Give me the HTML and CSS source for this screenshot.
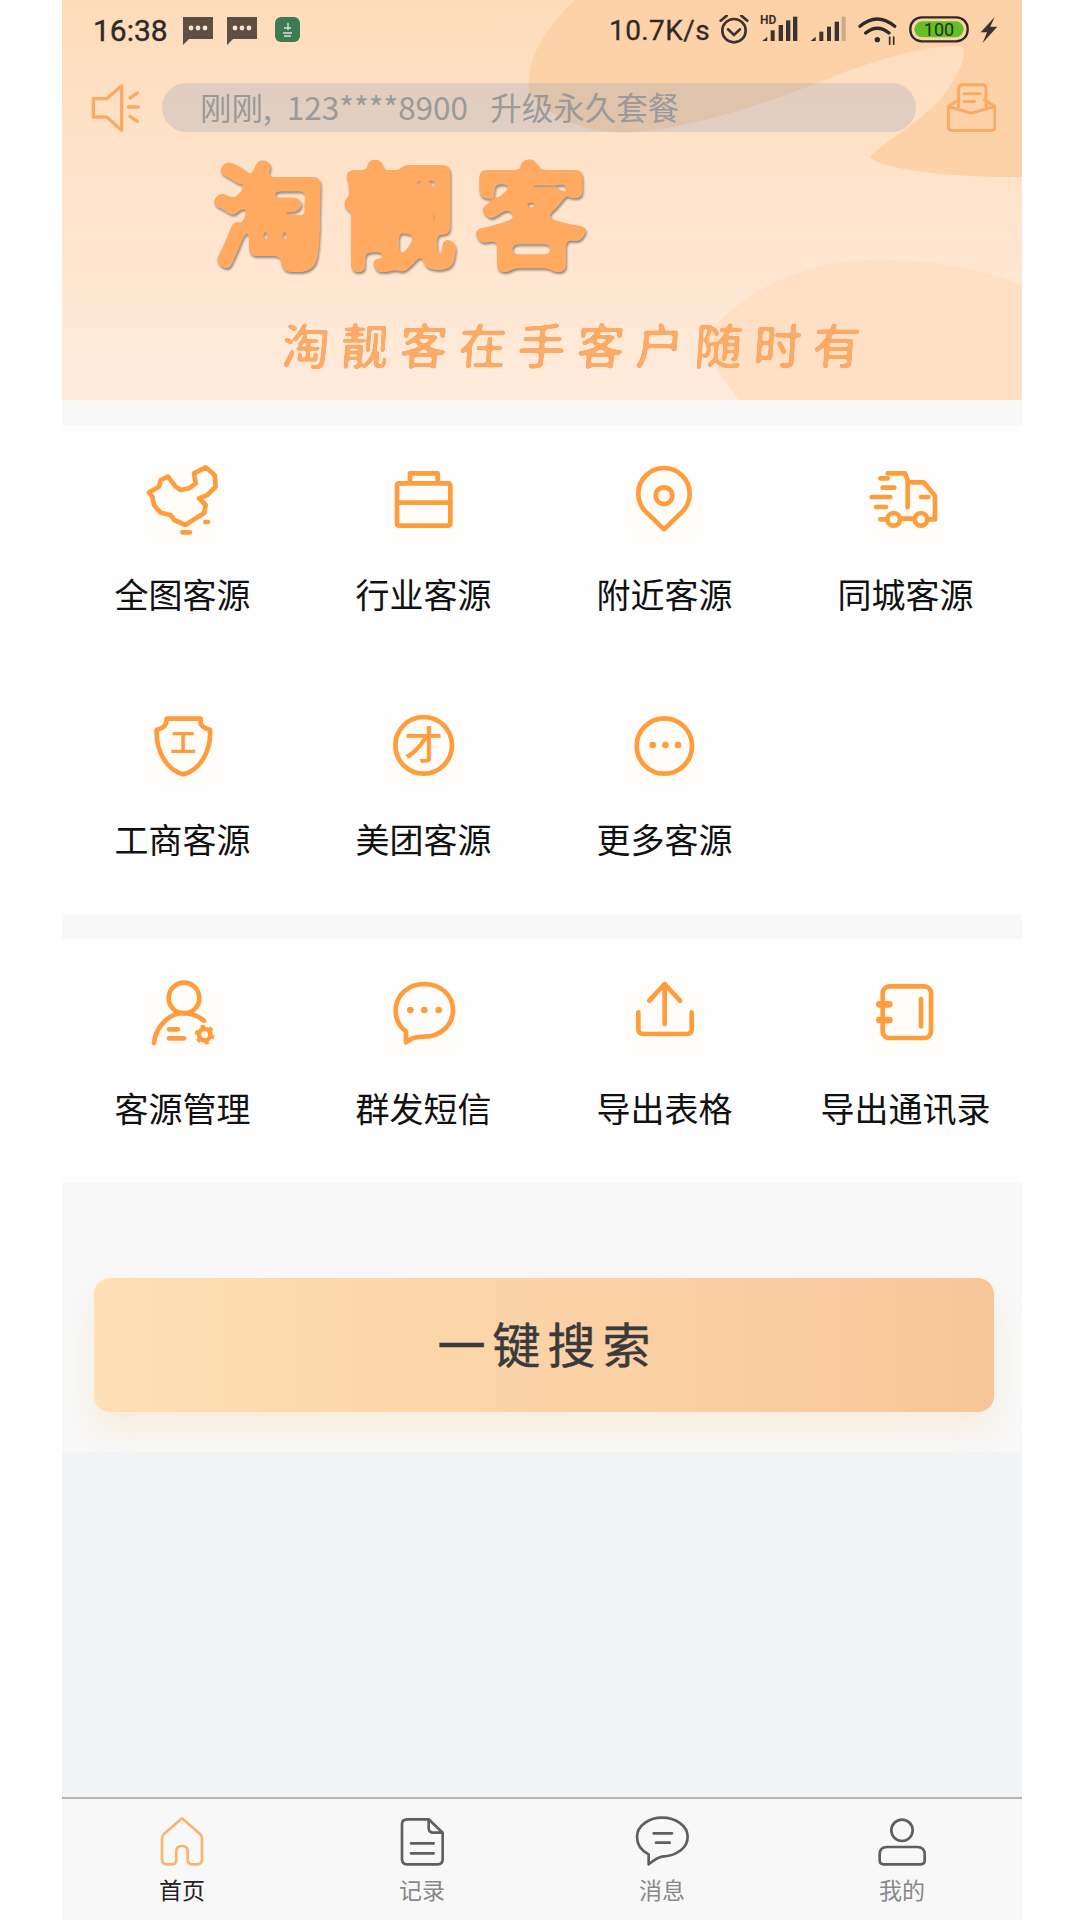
FILE: index.html
```html
<!DOCTYPE html>
<html>
  <head>
    <title>淘靓客</title>
    <meta charset="utf-8">
    <link rel="stylesheet" href="styles.css">
  </head>
  <body>
    <div class="phone">
      <header class="banner">
        <svg class="blobs" viewBox="62 0 960 400" width="960" height="400">
          <defs>
            <filter id="goo"><feGaussianBlur stdDeviation="3"/><feComponentTransfer><feFuncA type="linear" slope="12" intercept="-5"/></feComponentTransfer></filter>
            <filter id="goo-small"><feGaussianBlur stdDeviation="1.2"/><feComponentTransfer><feFuncA type="linear" slope="6" intercept="-2.2"/></feComponentTransfer></filter>
          </defs>
          <path class="blob-top" d="M575 0 C538 35 524 68 530 95 C560 125 600 136 640 132 C700 125 760 105 817 83 C860 65 920 45 960 46 C970 50 960 75 940 100 C915 125 880 145 870 157 C880 170 960 178 1022 177 V0 Z"/>
          <path class="blob-bottom" d="M704 340 C735 295 800 262 867 260 C930 258 985 270 1022 285 V400 H740 C722 380 710 360 704 340 Z"/>
        </svg>

        <div class="status">
          <span class="time">16:38</span>
          <svg class="st-msg" viewBox="0 0 30 28"><path d="M0 0 H30 V22 H6 L0 28 Z"/><circle class="dot" cx="8" cy="11" r="2.4"/><circle class="dot" cx="15" cy="11" r="2.4"/><circle class="dot" cx="22" cy="11" r="2.4"/></svg>
          <svg class="st-msg" viewBox="0 0 30 28"><path d="M0 0 H30 V22 H6 L0 28 Z"/><circle class="dot" cx="8" cy="11" r="2.4"/><circle class="dot" cx="15" cy="11" r="2.4"/><circle class="dot" cx="22" cy="11" r="2.4"/></svg>
          <svg class="st-app" viewBox="0 0 25 25"><rect width="25" height="25" rx="6"/><path d="M13 6 V13 M9 11 H16 M8 16 H17 M9 19 H16"/></svg>
          <div class="status-right">
            <span class="speed">10.7K/s</span>
            <svg class="st-alarm" viewBox="505 45 90 90"><circle cx="550" cy="92" r="35"/><path d="M510 62 L528 47 M590 62 L572 47 M532 88 L550 105 L568 88"/></svg>
            <svg class="st-signal" viewBox="28 30 114 90"><text class="hd" x="28" y="58">HD</text><path d="M35 108 L50 95 V108 Z"/><rect x="60" y="76" width="12" height="32"/><rect x="84" y="60" width="13" height="48"/><rect x="106" y="46" width="13" height="62"/><rect x="127" y="35" width="13" height="73"/></svg>
            <svg class="st-signal" viewBox="172 30 114 90"><path d="M177 108 L192 95 V108 Z"/><rect x="203" y="80" width="12" height="28"/><rect x="226" y="65" width="12" height="43"/><rect x="249" y="50" width="13" height="58"/><rect class="off" x="270" y="35" width="12" height="73"/></svg>
            <svg class="st-wifi" viewBox="322 30 120 90"><path d="M328 64 Q380 20 432 64 M345 84 Q380 55 415 84"/><circle cx="380" cy="104" r="8"/><path class="thin" d="M417 96 V118 M429 96 V118"/></svg>
            <svg class="st-batt" viewBox="480 30 180 90"><rect class="shell" x="484" y="37" width="172" height="72" rx="34"/><rect class="fill" x="496" y="49" width="148" height="48" rx="24"/><text x="570" y="92">100</text></svg>
            <svg class="st-bolt" viewBox="688 30 50 90"><path d="M734 34 L690 82 L710 82 L696 116 L742 65 L720 65 Z"/></svg>
          </div>
        </div>

        <div class="notice">
          <svg class="ic-speaker" viewBox="120 250 156 150"><path d="M215 258 L170 297 H130 V352 H170 L215 392 Z M240 295 L262 280 M235 322 H265 M240 350 L262 365"/></svg>
          <div class="notice-pill">刚刚<span class="comma">,</span> 123****8900  升级永久套餐</div>
          <svg class="ic-mail" viewBox="1190 250 150 146"><path d="M1228 300 L1197 320 V380 Q1197 392 1210 392 H1325 Q1337 392 1337 380 V320 L1305 300 M1197 320 L1265 340 L1337 320 M1228 320 V268 Q1228 255 1240 255 H1298 Q1310 255 1310 268 V320 M1245 282 H1292 M1245 305 H1275"/></svg>
        </div>

        <svg class="logo" viewBox="0 0 400 135" width="400" height="135"><text x="7" y="109">淘靓客</text></svg>
        <div class="slogan">淘靓客在手客户随时有</div>
      </header>

      <section class="grid two-rows">
        <div class="cell">
          <div class="icon"><svg viewBox="232 75 270 270"><path d="M265 187 L295 170 L300 150 L322 140 L345 170 L360 180 L385 175 L405 160 L400 130 L435 112 L462 135 L465 170 L440 195 L415 205 L435 225 L430 250 L400 268 L375 285 L340 270 L330 255 L300 248 L280 225 L275 200 Z M365 307 H388 M434 276 H442"/></svg></div>
          <div class="label">全图客源</div>
        </div>
        <div class="cell">
          <div class="icon"><svg viewBox="954 75 270 270"><rect x="1008" y="160" width="160" height="127" rx="6"/><path d="M1047 158 V130 H1130 V158 M1008 218 H1168"/></svg></div>
          <div class="label">行业客源</div>
        </div>
        <div class="cell">
          <div class="icon"><svg viewBox="240 75 270 270"><path d="M372 298 L317 245 A77 77 0 1 1 427 245 Z"/><circle cx="372" cy="197" r="25"/></svg></div>
          <div class="label">附近客源</div>
        </div>
        <div class="cell">
          <div class="icon"><svg viewBox="960 75 270 270"><path d="M1040 130 H1092 L1100 150 V232 M1100 157 H1148 L1182 197 V268 H1160 M1082 266 H1120 M1018 145 H1040 M1025 173 H1060 M992 201 H1048 M1005 231 H1035 M1018 268 H1038 M1140 201 H1162"/><circle cx="1058" cy="268" r="19"/><circle cx="1140" cy="268" r="19"/></svg></div>
          <div class="label">同城客源</div>
        </div>
        <div class="cell">
          <div class="icon"><svg viewBox="232 804 270 270"><path d="M318 860 H420 L420 875 Q425 888 448 893 C452 960 416 1015 368 1027 C320 1015 285 960 288 893 Q310 888 316 875 Z"/><text class="glyph" x="368" y="960" font-size="78">工</text></svg></div>
          <div class="label">工商客源</div>
        </div>
        <div class="cell">
          <div class="icon"><svg viewBox="954 804 270 270"><circle cx="1088" cy="940" r="85"/><text class="glyph thin-glyph" x="1088" y="982" font-size="116">才</text></svg></div>
          <div class="label">美团客源</div>
        </div>
        <div class="cell">
          <div class="icon"><svg viewBox="240 804 270 270"><circle cx="373" cy="942" r="83"/><circle class="solid" cx="338" cy="939" r="10"/><circle class="solid" cx="376" cy="939" r="10"/><circle class="solid" cx="414" cy="939" r="10"/></svg></div>
          <div class="label">更多客源</div>
        </div>
      </section>

      <section class="grid one-row">
        <div class="cell">
          <div class="icon"><svg viewBox="52 0 270 270"><circle cx="190" cy="87" r="46"/><path d="M100 222 C105 170 150 130 190 132 C215 134 235 142 250 155 M145 181 H172 M145 208 H190"/><circle cx="252" cy="197" r="17"/><circle class="teeth" cx="252" cy="197" r="25"/></svg></div>
          <div class="label">客源管理</div>
        </div>
        <div class="cell">
          <div class="icon"><svg viewBox="774 0 270 270"><path d="M855 220 V188 C835 172 824 150 824 125 C824 78 862 45 910 45 C958 45 996 78 996 123 C996 168 958 203 910 203 C895 203 885 203 870 210 Z"/><circle class="solid" cx="868" cy="123" r="10"/><circle class="solid" cx="910" cy="123" r="10"/><circle class="solid" cx="953" cy="123" r="10"/></svg></div>
          <div class="label">群发短信</div>
        </div>
        <div class="cell">
          <div class="icon"><svg viewBox="28 0 270 270"><path d="M83 130 V180 Q83 195 98 195 H228 Q243 195 243 180 V130 M162 165 V45 M116 95 L162 45 L208 95"/></svg></div>
          <div class="label">导出表格</div>
        </div>
        <div class="cell">
          <div class="icon"><svg viewBox="750 0 270 270"><rect x="815" y="52" width="145" height="155" rx="20"/><path class="rings" d="M805 106 H835 M805 153 H835"/><path d="M930 90 V172"/></svg></div>
          <div class="label">导出通讯录</div>
        </div>
      </section>

      <section class="search-wrap">
        <button class="search-btn">一键搜索</button>
      </section>

      <div class="filler"></div>

      <nav class="tabs">
        <div class="tab active">
          <svg viewBox="65 30 180 180"><path d="M155 52 L100 100 Q95 105 95 115 V175 Q95 190 110 190 H125 Q138 190 138 175 V150 Q138 135 155 135 Q172 135 172 150 V175 Q172 190 185 190 H200 Q215 190 215 175 V115 Q215 105 210 100 Z"/></svg>
          <span>首页</span>
        </div>
        <div class="tab">
          <svg viewBox="785 30 180 180"><path d="M895 55 H830 Q815 55 815 70 V175 Q815 190 830 190 H922 Q937 190 937 175 V95 Z M895 55 V80 Q895 95 910 95 H937 M842 127 H910 M842 157 H910"/></svg>
          <span>记录</span>
        </div>
        <div class="tab">
          <svg viewBox="65 30 180 180"><path d="M115 190 V160 C92 148 80 128 80 107 C80 75 115 50 155 50 C197 50 232 75 232 107 C232 140 200 165 155 167 C140 170 130 178 115 190 Z M130 97 H185 M137 125 H178"/></svg>
          <span>消息</span>
        </div>
        <div class="tab">
          <svg viewBox="785 30 180 180"><circle cx="875" cy="88" r="32"/><path d="M830 138 H921 Q943 138 943 160 V178 Q943 190 931 190 H820 Q808 190 808 178 V160 Q808 138 830 138 Z"/></svg>
          <span>我的</span>
        </div>
      </nav>
    </div>
  </body>
</html>
```

FILE: styles.css
```css
* { box-sizing: border-box; }
body { margin: 0; background: #fff; font-family: "Noto Sans CJK SC", "Noto Sans", sans-serif; }
svg { display: block; }
.phone { width: 960px; height: 1920px; margin-left: 62px; display: flex; flex-direction: column; background: #f3f4f6; overflow: hidden; }

/* banner */
.banner { position: relative; height: 400px; flex: none; background: linear-gradient(180deg, #fedcbb 0%, #ffebdc 100%); }
.blobs { position: absolute; top: 0; left: 0; }
.blob-top { fill: #fdd2a8; }
.blob-bottom { fill: #ffe0c5; }

.status { position: relative; height: 60px; padding: 0 26px 0 31px; display: flex; align-items: center; color: #2f2a26; }
.time { font: 400 30px Roboto, sans-serif; -webkit-text-stroke: 0.4px #2f2a26; margin-right: 15px; }
.st-msg { width: 30px; height: 28px; margin-right: 14px; margin-top: 1px; fill: #5d4f44; }
.st-msg .dot { fill: #fbe3cc; }
.st-app { width: 25px; height: 25px; margin-left: 4px; margin-top: -1px; }
.st-app rect { fill: #3e7a52; }
.st-app path { fill: none; stroke: #cfe3d4; stroke-width: 1.4; }
.status-right { margin-left: auto; display: flex; align-items: center; gap: 11px; }
.speed { font: 400 28px Roboto, sans-serif; -webkit-text-stroke: 0.3px #2f2a26; letter-spacing: 0.4px; margin-right: -2px; }
.st-alarm { width: 30px; height: 30px; fill: none; stroke: #3a3330; stroke-width: 8; stroke-linecap: round; }
.st-signal { width: 38px; height: 30px; fill: #3a3330; }
.st-signal .off { fill: #c8ab90; }
.hd { font: 700 36px Roboto, sans-serif; }
.st-wifi { width: 40px; height: 30px; fill: #2f2a26; }
.st-wifi path { fill: none; stroke: #2f2a26; stroke-width: 10; stroke-linecap: round; }
.st-wifi .thin { stroke-width: 5; }
.st-batt { width: 60px; height: 30px; }
.st-batt .shell { fill: none; stroke: #2f2a26; stroke-width: 7; }
.st-batt .fill { fill: #65bf22; }
.st-batt text { font: 400 54px Roboto, sans-serif; fill: #1c2f10; text-anchor: middle; }
.st-bolt { width: 16px; height: 30px; fill: #3a3330; overflow: visible; }

.notice { position: relative; margin-top: 23px; height: 49px; padding-left: 28px; display: flex; align-items: center; }
.ic-speaker { width: 52px; height: 50px; fill: none; stroke: #fba964; stroke-width: 10; stroke-linejoin: round; stroke-linecap: round; }
.notice-pill { width: 754px; height: 49px; margin-left: 20px; padding-left: 38px; border-radius: 25px; background: rgba(120, 140, 180, 0.22); color: #9a9a9a; font-size: 31.5px; line-height: 47px; word-spacing: 4px; white-space: pre; }
.comma { margin-right: 4px; }
.ic-mail { width: 50px; height: 49px; margin-left: 30px; fill: none; stroke: #fba964; stroke-width: 9; stroke-linejoin: round; stroke-linecap: round; }

.logo { position: relative; margin: 18px 0 0 143px; overflow: visible; filter: drop-shadow(1px 2px 1px #8f8a84); }
.logo text { font: 400 114px "Noto Sans CJK SC", sans-serif; letter-spacing: 17px; fill: #ffaa60; stroke: #ffaa60; stroke-width: 6px; stroke-linejoin: round; filter: url(#goo); }
.slogan { position: relative; margin: 28px 0 0 220px; font-size: 48px; font-weight: 500; line-height: 60px; letter-spacing: 11px; color: #fbab68; white-space: nowrap; transform: skewX(-4deg); filter: url(#goo-small); }

/* icon grids */
.grid { flex: none; border-top: 25px solid #f8f8f8; background: #fefefe; display: grid; grid-template-columns: repeat(4, 241px); grid-auto-rows: 244.5px; }
.two-rows { height: 514px; }
.one-row { height: 269px; }
.cell { display: flex; flex-direction: column; align-items: center; padding-top: 30px; }
.icon { width: 90px; height: 90px; background: radial-gradient(circle at 50% 60%, #fffcf8 0%, #fffdfa 55%, rgba(255, 255, 255, 0) 72%); }
.icon svg { width: 90px; height: 90px; fill: none; stroke: #ff9d3c; stroke-width: 14; stroke-linecap: round; stroke-linejoin: round; }
.icon .solid { fill: #ff9d3c; stroke: none; }
.icon .glyph { font-family: "Noto Sans CJK SC", sans-serif; font-weight: 700; text-anchor: middle; fill: #ff9d3c; stroke: none; }
.icon .thin-glyph { font-weight: 500; }
.icon .teeth { stroke-width: 9; stroke-dasharray: 13 13.2; stroke-linecap: butt; }
.icon .rings { stroke-width: 20; }
.label { margin-top: 27px; font-size: 34px; line-height: 44px; color: #111; white-space: nowrap; }

/* search */
.search-wrap { flex: none; height: 269px; padding: 95px 28px 0 32px; background: #f8f8f8; }
.search-btn { width: 900px; height: 134px; border: none; border-radius: 16px; background: linear-gradient(90deg, #ffdfb6 0%, #f7c698 100%); box-shadow: 0 18px 30px rgba(250, 200, 130, 0.22); color: #3a3a3a; font-family: inherit; font-size: 48px; font-weight: 400; -webkit-text-stroke: 0.5px #3a3a3a; letter-spacing: 7px; padding: 0 0 6px 7px; }
.filler { flex: 1; }

/* tabs */
.tabs { flex: none; height: 123px; padding-top: 12px; border-top: 2px solid #b4b4b4; background: #f8f8f8; display: flex; }
.tab { width: 240px; display: flex; flex-direction: column; align-items: center; color: #888; font-size: 23px; line-height: 30px; }
.tab svg { width: 60px; height: 60px; margin-bottom: 3px; fill: none; stroke: #5f5f5f; stroke-width: 8; stroke-linejoin: round; stroke-linecap: round; }
.tab.active { color: #222; }
.tab.active svg { stroke: #fbb36f; }
```
